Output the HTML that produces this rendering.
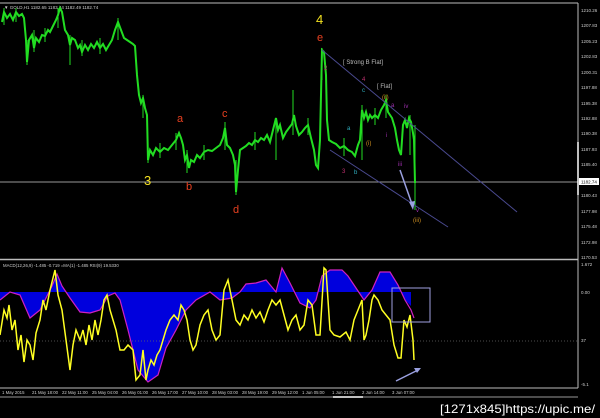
<!DOCTYPE html>
<html><head><meta charset="utf-8"><style>
html,body{margin:0;padding:0;background:#000;}
svg{display:block;font-family:"Liberation Sans",sans-serif;}
</style></head><body>
<svg width="600" height="418" viewBox="0 0 600 418" xmlns="http://www.w3.org/2000/svg">
<rect width="600" height="418" fill="#000"/>
<line x1="0" y1="3" x2="578" y2="3" stroke="#bbb" stroke-width="1"/>
<line x1="578" y1="3" x2="578" y2="388" stroke="#bbb" stroke-width="1"/>
<line x1="0" y1="259.5" x2="578" y2="259.5" stroke="#bbb" stroke-width="1.5"/>
<line x1="0" y1="388" x2="578" y2="388" stroke="#bbb" stroke-width="1"/>
<line x1="0" y1="182" x2="578" y2="182" stroke="#999" stroke-width="1"/>
<text x="4" y="9" fill="#ccc" font-size="4.5">▼ GOLD,H1  1182.65 1183.44 1182.49 1182.74</text>
<polyline fill="none" stroke="#22dd22" stroke-width="2" points="2,22 4,12 7,18 10,14 13,20 16,12 19,16 22,14 24,18 26,40 27,62 29,40 32,35 34,48 36,38 39,42 42,35 45,36 48,30 50,32 53,26 56,20 58,15 60,8 62,12 65,30 68,35 70,45 72,38 75,40 78,48 80,45 82,52 85,45 88,50 91,44 94,48 97,42 100,48 103,44 106,50 109,45 112,40 115,30 118,22 121,30 124,38 127,40 130,42 133,44 135,46 137,75 139,95 141,103 143,98 145,108 147,115 148,160 150,150 153,155 156,148 160,152 164,148 168,150 172,145 176,140 179,133 181,138 183,145 185,160 187,155 189,168 191,160 194,162 197,155 200,158 204,152 208,150 212,151 216,148 220,145 223,138 225,128 227,145 230,148 233,155 235,165 236,192 238,170 240,150 243,148 246,146 249,143 252,145 255,140 258,142 261,138 264,140 267,135 270,142 273,130 276,118 278,130 280,125 283,138 286,132 289,128 292,124 294,115 296,126 299,135 302,132 305,128 308,125 311,138 314,150 316,165 318,168 320,140 322,50 324,52 326,75 327,120 329,140 332,142 336,144 340,148 344,146 348,150 352,152 355,156 358,145 360,140 362,110 364,118 366,112 368,120 370,115 372,118 375,115 378,118 381,110 384,105 386,100 388,112 390,115 392,118 395,128 397,140 399,150 401,155 403,125 405,120 407,128 409,118 411,122 413,133 414,140 415,183"/>
<g stroke="#22dd22" stroke-width="1">
<line x1="4" y1="8" x2="4" y2="25"/><line x1="16" y1="8" x2="16" y2="22"/><line x1="27" y1="40" x2="27" y2="65"/><line x1="34" y1="30" x2="34" y2="52"/><line x1="45" y1="28" x2="45" y2="42"/><line x1="58" y1="8" x2="58" y2="28"/><line x1="70" y1="35" x2="70" y2="65"/><line x1="82" y1="40" x2="82" y2="56"/><line x1="100" y1="38" x2="100" y2="54"/><line x1="118" y1="18" x2="118" y2="40"/><line x1="143" y1="95" x2="143" y2="118"/><line x1="148" y1="145" x2="148" y2="163"/><line x1="160" y1="143" x2="160" y2="158"/><line x1="176" y1="133" x2="176" y2="150"/><line x1="187" y1="150" x2="187" y2="173"/><line x1="204" y1="145" x2="204" y2="160"/><line x1="225" y1="122" x2="225" y2="150"/><line x1="236" y1="160" x2="236" y2="195"/><line x1="255" y1="132" x2="255" y2="150"/><line x1="276" y1="118" x2="276" y2="160"/><line x1="293" y1="90" x2="293" y2="135"/><line x1="308" y1="118" x2="308" y2="135"/><line x1="322" y1="48" x2="322" y2="80"/><line x1="344" y1="138" x2="344" y2="156"/><line x1="362" y1="105" x2="362" y2="160"/><line x1="375" y1="108" x2="375" y2="125"/><line x1="386" y1="95" x2="386" y2="118"/><line x1="410" y1="115" x2="410" y2="155"/><line x1="415" y1="125" x2="415" y2="210"/>
</g>
<line x1="322" y1="50" x2="517" y2="212" stroke="#4a4a90" stroke-width="1"/>
<line x1="330" y1="150" x2="448" y2="227" stroke="#4a4a90" stroke-width="1"/>
<line x1="400" y1="170" x2="413" y2="207" stroke="#9aa0e0" stroke-width="1.5"/>
<polygon points="413,210 409,202 415,201" fill="#9aa0e0"/>
<g font-size="13" fill="#f2e020"><text x="316" y="24">4</text><text x="144" y="185">3</text></g>
<g font-size="11" fill="#e84020"><text x="317" y="41">e</text><text x="177" y="122">a</text><text x="186" y="190">b</text><text x="222" y="117">c</text><text x="233" y="213">d</text></g>
<text x="343" y="64" fill="#bbb" font-size="6">[ Strong B Flat]</text>
<text x="377" y="88" fill="#bbb" font-size="6">[ Flat]</text>
<g font-size="6">
<text x="324" y="70" fill="#c03070">2</text><text x="362" y="81" fill="#c03070">4</text><text x="342" y="173" fill="#c03070">3</text>
<text x="362" y="92" fill="#30b0c0">c</text><text x="347" y="130" fill="#30b0c0">a</text><text x="354" y="174" fill="#30b0c0">b</text>
<text x="382" y="99" fill="#d09020">(ii)</text><text x="366" y="145" fill="#d09020">(i)</text><text x="413" y="222" fill="#d09020">(iii)</text>
<text x="391" y="107" fill="#a030b0">a</text><text x="404" y="108" fill="#a030b0">iv</text><text x="386" y="137" fill="#a030b0">i</text><text x="398" y="166" fill="#a030b0">iii</text><text x="416" y="212" fill="#a030b0">v</text>
</g>
<g font-size="4.5" fill="#ccc">
<text x="581" y="12">1210.26</text><text x="581" y="27">1207.83</text><text x="581" y="43">1205.23</text><text x="581" y="58">1202.83</text><text x="581" y="74">1200.31</text><text x="581" y="89">1197.88</text><text x="581" y="105">1195.38</text><text x="581" y="120">1192.88</text><text x="581" y="135">1190.38</text><text x="581" y="151">1187.93</text><text x="581" y="166">1185.40</text><text x="581" y="197">1180.43</text><text x="581" y="213">1177.98</text><text x="581" y="228">1175.48</text><text x="581" y="244">1172.98</text><text x="581" y="259">1170.53</text>
<text x="581" y="266">1.672</text><text x="581" y="294">0.00</text><text x="581" y="342">37</text><text x="581" y="386">-5.1</text>
</g>
<line x1="578" y1="142" x2="578" y2="195" stroke="#fff" stroke-width="1.5"/>
<rect x="579" y="178" width="20" height="7" fill="#fff"/>
<text x="581" y="183.5" font-size="4.5" fill="#000">1182.74</text>
<text x="3" y="267" fill="#ccc" font-size="4.3">MACD(12,26,9) -1.485 -0.719  =MA(1) -1.485  RSI(9) 19.5330</text>
<path d="M0,292 L0,300 L10,292 L20,295 L30,318 L40,310 L52,286 L57,274 L62,286 L70,298 L80,312 L90,313 L100,310 L108,296 L115,293 L120,300 L128,330 L138,370 L148,382 L158,375 L166,348 L176,330 L186,310 L196,300 L210,292 L220,300 L232,298 L240,292 L246,284 L256,283 L266,280 L276,292 L282,268 L290,283 L300,303 L310,308 L316,300 L322,276 L330,270 L342,270 L348,276 L356,288 L364,300 L372,290 L380,272 L390,272 L398,285 L405,300 L411,306 L411,292 Z" fill="#0000dd"/>
<polyline fill="none" stroke="#d020c0" stroke-width="1.2" points="0,300 10,292 20,295 30,318 40,310 52,286 57,274 62,286 70,298 80,312 90,313 100,310 108,296 115,293 120,300 128,330 138,370 148,382 158,375 166,348 176,330 186,310 196,300 210,292 220,300 232,298 240,292 246,284 256,283 266,280 276,292 282,268 290,283 300,303 310,308 316,300 322,276 330,270 342,270 348,276 356,288 364,300 372,290 380,272 390,272 398,285 405,300 411,310 414,318"/>
<line x1="0" y1="341" x2="578" y2="341" stroke="#666" stroke-width="0.7" stroke-dasharray="1,2"/>
<polyline fill="none" stroke="#ffff22" stroke-width="1.5" points="0,335 4,310 7,318 9,305 12,330 15,320 18,350 21,335 24,362 27,340 30,345 33,360 36,333 40,320 43,300 46,310 50,290 55,270 58,295 62,310 66,340 70,370 73,345 76,330 80,340 83,330 86,345 89,325 92,340 95,320 98,335 101,320 104,300 107,295 110,310 113,320 116,330 120,350 124,350 128,345 133,350 136,380 140,375 143,350 146,380 148,370 151,360 154,365 157,355 160,350 163,340 166,330 170,320 174,315 178,320 181,305 184,310 187,320 190,340 193,350 196,345 200,325 204,315 208,310 212,330 216,340 220,335 224,290 228,280 232,300 236,320 240,325 244,315 248,320 252,310 256,318 260,312 264,322 268,310 272,300 276,305 280,300 284,315 288,330 292,320 296,315 300,330 304,325 308,300 312,305 316,335 320,335 324,268 326,270 330,330 334,335 340,337 346,332 350,340 354,320 358,310 362,300 364,340 366,335 369,320 372,300 374,295 378,300 382,310 386,315 390,320 394,345 398,358 401,358 404,320 407,327 410,315 413,340 414,360"/>
<rect x="392" y="288" width="38" height="34" fill="none" stroke="#a0a0e0" stroke-width="1"/>
<line x1="396" y1="381" x2="418" y2="370" stroke="#9aa0e0" stroke-width="1.5"/>
<polygon points="421,368 414,368 417,373" fill="#9aa0e0"/>
<g font-size="4.3" fill="#ccc">
<text x="2" y="394">1 May 2015</text><text x="32" y="394">21 May 18:00</text><text x="62" y="394">22 May 11:00</text><text x="92" y="394">25 May 04:00</text><text x="122" y="394">26 May 01:00</text><text x="152" y="394">26 May 17:00</text><text x="182" y="394">27 May 10:00</text><text x="212" y="394">28 May 03:00</text><text x="242" y="394">28 May 19:00</text><text x="272" y="394">29 May 12:00</text><text x="302" y="394">1 Jun 05:00</text><text x="332" y="394">1 Jun 21:00</text><text x="362" y="394">2 Jun 14:00</text><text x="392" y="394">3 Jun 07:00</text>
</g>
<line x1="0" y1="397" x2="578" y2="397" stroke="#ccc" stroke-width="0.8"/>
<line x1="333" y1="397" x2="363" y2="397" stroke="#fff" stroke-width="1.5"/>
<text x="440" y="413" fill="#fff" font-size="12" textLength="155" lengthAdjust="spacingAndGlyphs">[1271x845]https://upic.me/</text>
</svg>
</body></html>
